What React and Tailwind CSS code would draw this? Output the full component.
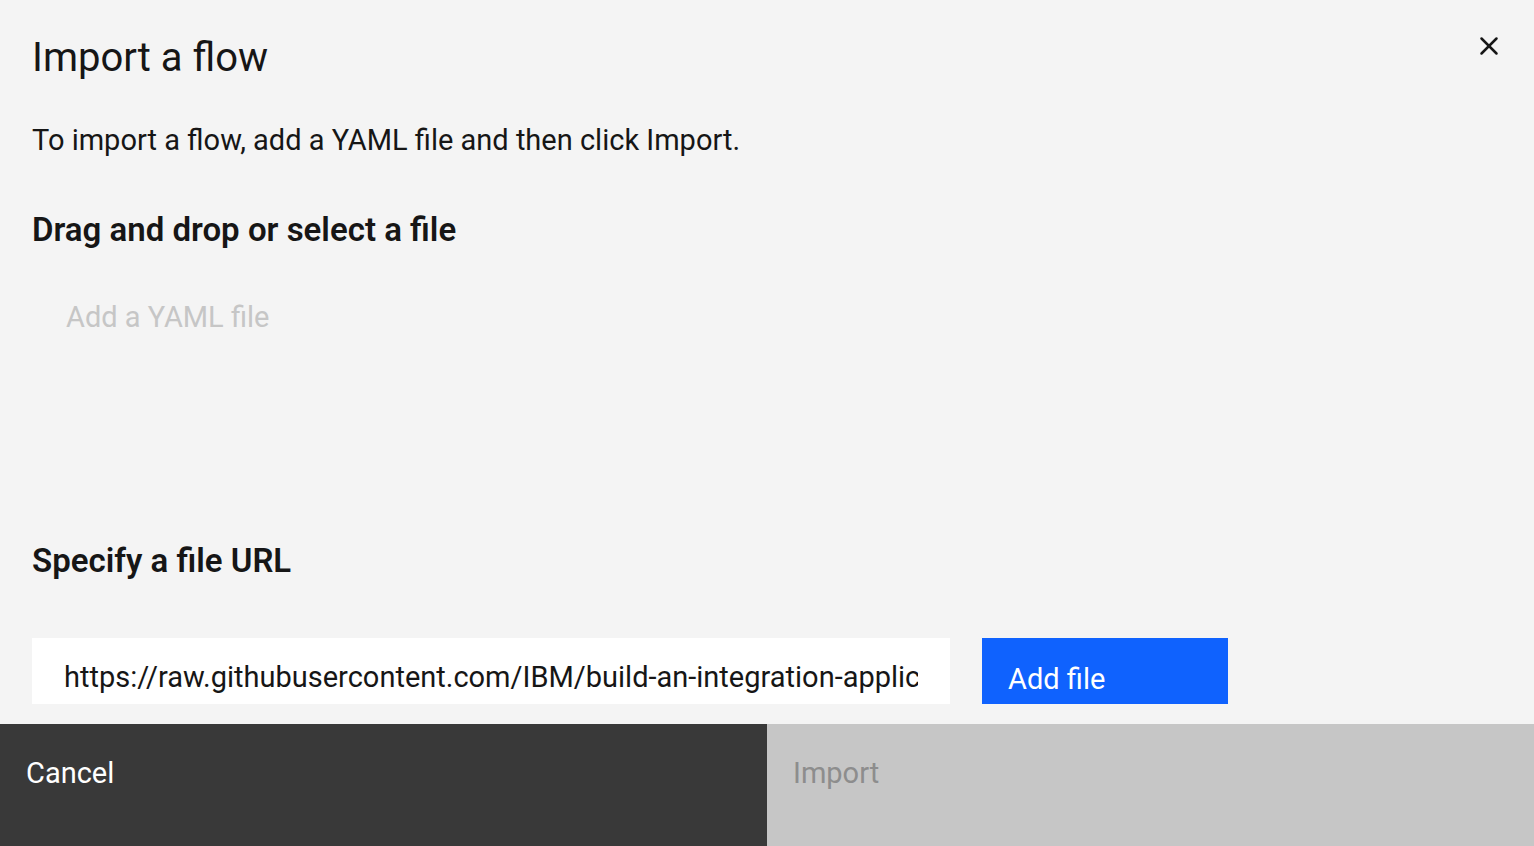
import { X } from "lucide-react";

export default function App() {
  const font = { fontFamily: "Roboto, 'Noto Sans', sans-serif" };
  const url = "https://raw.githubusercontent.com/IBM/build-an-integration-application/main/flows/import-flow.yaml";

  return (
    <div className="flex h-[846px] w-full flex-col bg-[#f4f4f4] text-[#161616]" style={font}>
      <div className="flex flex-1 flex-col px-8">
        <div className="flex items-start justify-between pt-[31px]">
          <h1 className="text-[40px] leading-[54px] font-normal">Import a flow</h1>
          <button className="mt-[-4px] -mr-[6px] p-1 text-[#161616]">
            <X size={30} strokeWidth={2} />
          </button>
        </div>
        <p className="mt-[37px] text-[29px] leading-[36px]">To import a flow, add a YAML file and then click Import.</p>
        <h2 className="mt-[51px] text-[33px] leading-[42px] font-semibold">Drag and drop or select a file</h2>
        <div className="mt-[48px] h-[241px] pl-[34px] text-[29px] leading-[36px] text-[#c6c6c6]">Add a YAML file</div>
        <h2 className="text-[33px] leading-[42px] font-semibold">Specify a file URL</h2>
        <div className="mt-[56px] flex gap-8">
          <input
            readOnly
            value={url}
            className="h-[66px] w-[918px] bg-white px-8 pt-[12px] text-[29px] text-[#161616] outline-none"
            style={font}
          />
          <button className="flex h-[66px] w-[246px] items-end bg-[#0f62fe] pb-[3px] pl-[26px] text-[29px] text-white">Add file</button>
        </div>
      </div>
      <div className="flex h-[122px]">
        <button className="flex w-1/2 items-start bg-[#393939] pt-[28px] pl-[26px] text-[29px] text-white">Cancel</button>
        <button className="flex w-1/2 items-start bg-[#c6c6c6] pt-[28px] pl-[26px] text-[29px] text-[#8d8d8d]">Import</button>
      </div>
    </div>
  );
}
